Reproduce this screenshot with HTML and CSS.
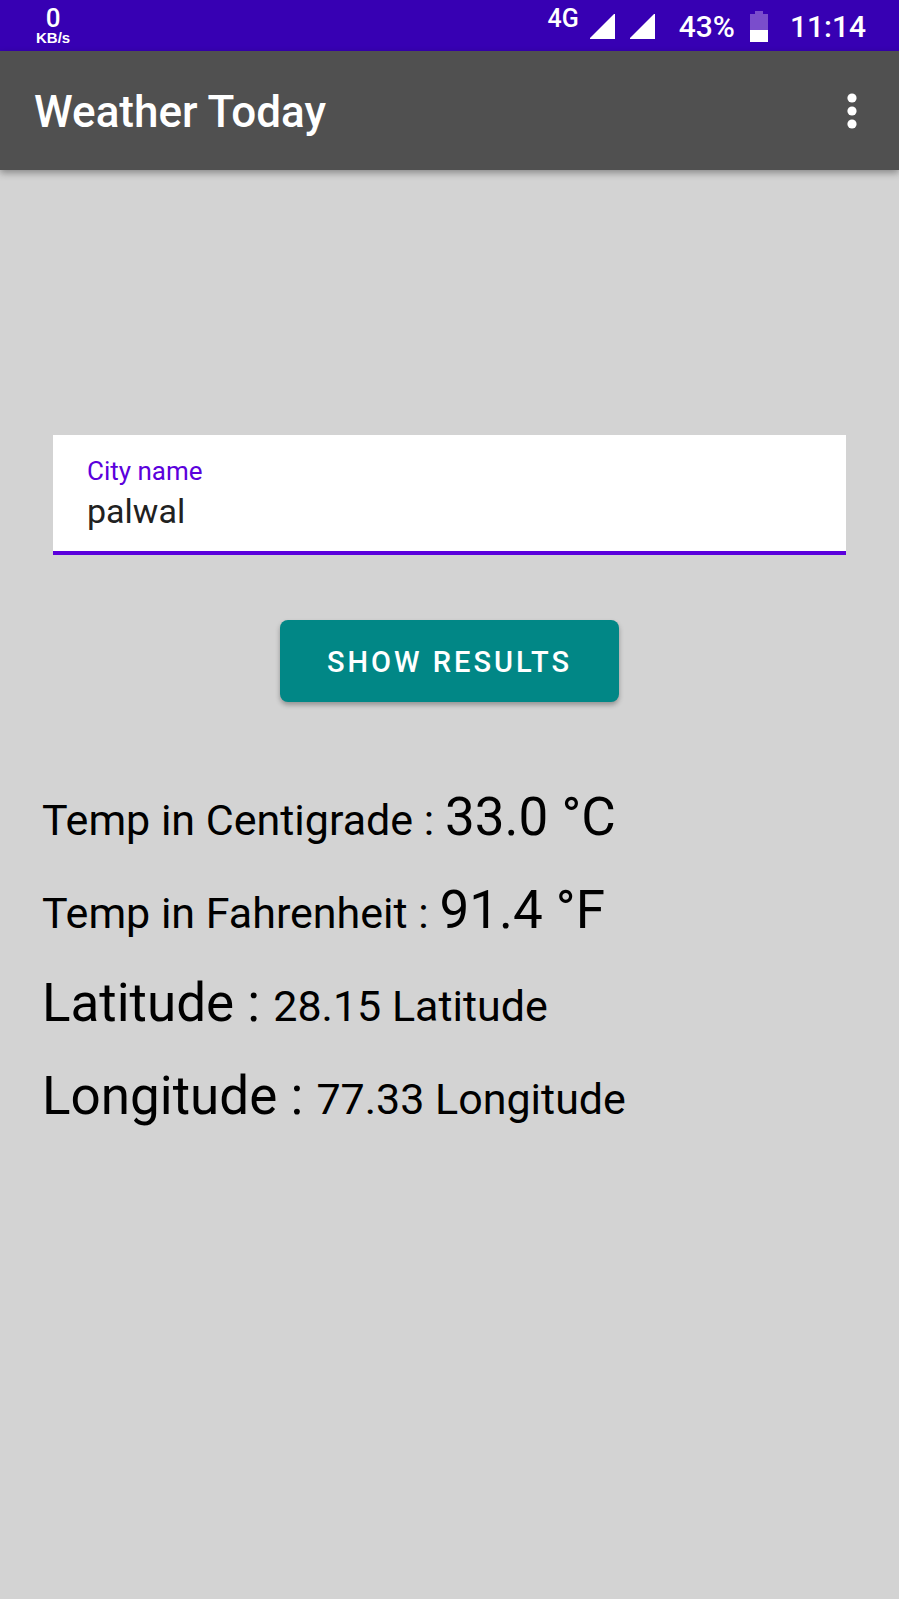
FILE: index.html
```html
<!DOCTYPE html>
<html lang="en">
<head>
<meta charset="utf-8">
<meta name="viewport" content="width=device-width, initial-scale=1">
<title>Weather Today</title>
<link rel="stylesheet" href="styles.css">
</head>
<body>
<div class="status-bar">
  <div class="net-speed"><span class="net-value">0</span><span class="net-unit">KB/s</span></div>
  <div class="status-icons">
    <span class="network">4G</span>
    <svg class="signal" viewBox="0 0 25 25" aria-hidden="true"><path d="M24 0h1v25H0v-1z" fill="#fff"/></svg>
    <svg class="signal signal-second" viewBox="0 0 25 25" aria-hidden="true"><path d="M24 0h1v25H0v-1z" fill="#fff"/></svg>
    <span class="percent">43%</span>
    <svg class="battery" viewBox="0 0 18 31" aria-hidden="true"><path d="M5 0h8v3h5v16H0V3h5z" fill="#7a4dcc"/><path d="M0 19h18v12H0z" fill="#fff"/></svg>
    <span class="clock">11:14</span>
  </div>
</div>
<header class="app-bar">
  <h1 class="title">Weather Today</h1>
  <button class="menu" type="button" aria-label="More options">
    <svg class="dots" viewBox="0 0 10 36" aria-hidden="true"><g fill="#fff"><circle cx="5" cy="5" r="4.6"/><circle cx="5" cy="18" r="4.6"/><circle cx="5" cy="31" r="4.6"/></g></svg>
  </button>
</header>
<main class="content">
  <form class="search">
    <div class="field">
      <label class="field-label" for="city">City name</label>
      <input class="field-input" id="city" type="text" value="palwal">
    </div>
    <button class="submit" type="button">SHOW RESULTS</button>
  </form>
  <dl class="results">
    <div class="row"><dt class="small">Temp in Centigrade : </dt><dd>33.0 °C</dd></div>
    <div class="row"><dt class="small">Temp in Fahrenheit : </dt><dd>91.4 °F</dd></div>
    <div class="row"><dt>Latitude : </dt><dd class="small">28.15 Latitude</dd></div>
    <div class="row"><dt>Longitude : </dt><dd class="small">77.33 Longitude</dd></div>
  </dl>
</main>
</body>
</html>
```
FILE: styles.css
```css
* { box-sizing: border-box; }

body {
  margin: 0;
  min-height: 100vh;
  background: #d3d3d3;
  color: #000;
  font-family: Roboto, "Liberation Sans", sans-serif;
}

.status-bar {
  display: flex;
  justify-content: space-between;
  height: 51px;
  padding: 0 33px 0 36px;
  background: #3700b3;
  color: #fff;
  font-weight: 500;
}

.net-speed {
  display: flex;
  flex-direction: column;
  align-items: center;
  padding-top: 6px;
  font-family: "Liberation Sans", sans-serif;
  font-weight: 700;
}

.net-value {
  font-family: Roboto, sans-serif;
  font-weight: 500;
  font-size: 26px;
  line-height: 24px;
}

.net-unit { font-size: 15px; line-height: 15px; }

.status-icons {
  display: flex;
  align-items: center;
  padding-top: 2px;
  font-size: 30px;
}

.network {
  align-self: flex-start;
  margin-right: 11px;
  padding-top: 4px;
  font-size: 25px;
  line-height: 26px;
}

.signal { width: 25px; height: 25px; }
.signal-second { margin: 0 24px 0 15px; }
.battery { width: 18px; height: 31px; margin: 0 22px 0 15px; }

.app-bar {
  display: flex;
  align-items: center;
  justify-content: space-between;
  height: 119px;
  padding: 0 32px 0 34px;
  background: #505050;
  color: #fff;
  box-shadow: 0 3px 7px rgba(0, 0, 0, 0.35);
}

.title { margin: 0; padding-top: 2px; font-size: 44px; font-weight: 500; }

.menu {
  display: flex;
  padding: 10px;
  border: 0;
  background: none;
}

.dots { width: 10px; height: 36px; }

.search {
  display: flex;
  flex-direction: column;
  align-items: center;
  gap: 65px;
  padding: 265px 53px 0;
}

.field {
  display: flex;
  flex-direction: column;
  width: 100%;
  padding: 20px 34px 16px;
  border-bottom: 4px solid #5b00dc;
  background: #fff;
}

.field-label {
  color: #5b00dc;
  font-size: 26px;
  line-height: 32px;
}

.field-input {
  width: 100%;
  height: 48px;
  padding: 0;
  border: 0;
  outline: 0;
  background: none;
  color: #212121;
  font: 34px Roboto, "Liberation Sans", sans-serif;
}

.submit {
  padding: 2px 47px 0;
  border: 0;
  border-radius: 8px;
  background: #018786;
  color: #fff;
  font: 500 29px/80px Roboto, "Liberation Sans", sans-serif;
  letter-spacing: 3px;
  box-shadow: 0 3px 5px rgba(0, 0, 0, 0.3);
}

.results { margin: 69px 42px 0; }

.row { font-size: 53px; line-height: 93px; }
.row dt, .row dd { display: inline; margin: 0; white-space: pre-wrap; }
.row .small { font-size: 43px; line-height: 43px; }
```
